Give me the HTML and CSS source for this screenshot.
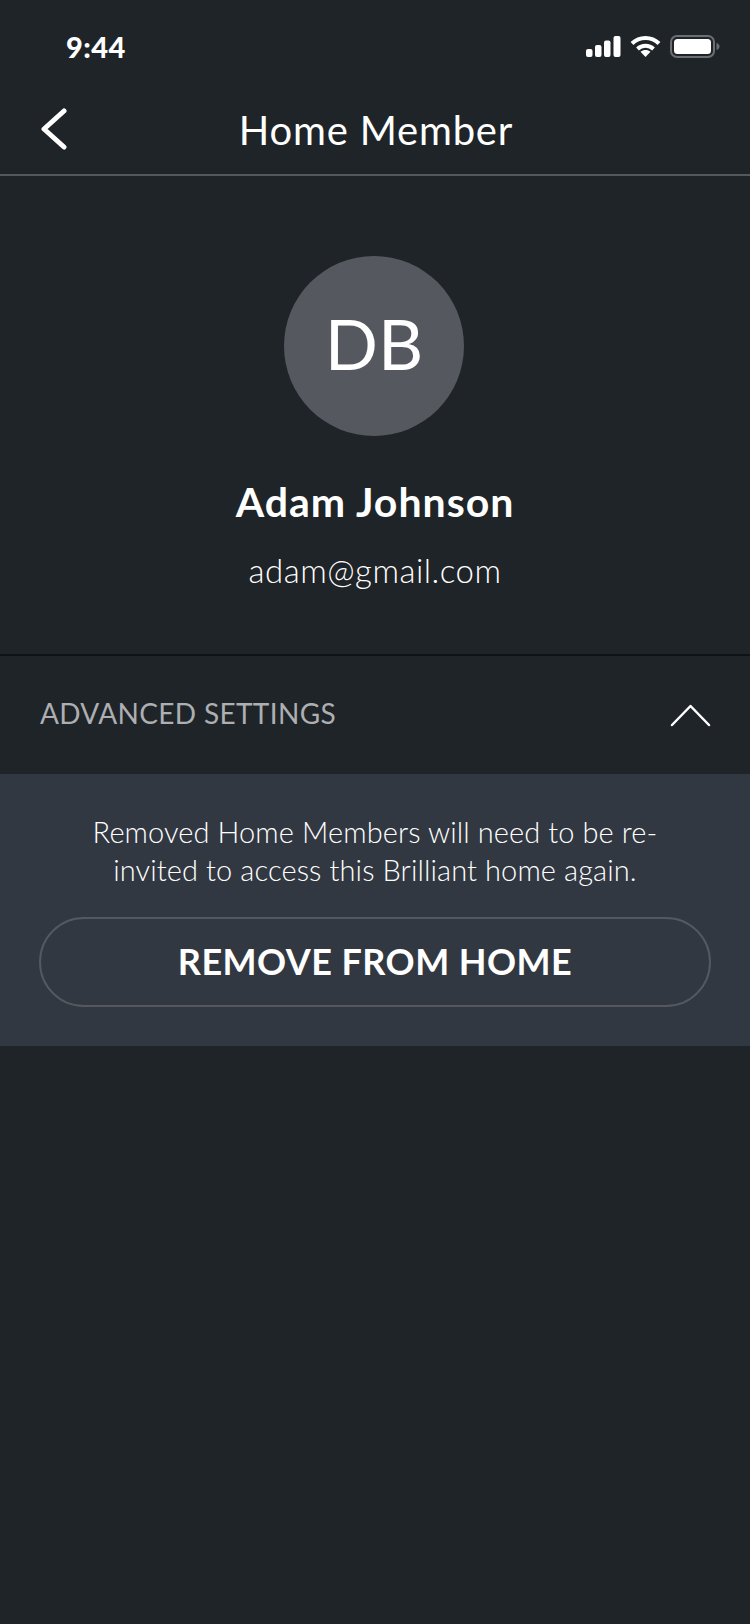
FILE: index.html
```html
<!DOCTYPE html>
<html lang="en">
<head>
    <meta charset="UTF-8">
    <meta name="viewport" content="width=device-width, initial-scale=1.0">
    <title>Home Member</title>
    <link rel="stylesheet" href="styles.css">
</head>
<body>
    <div class="screen">
        <div class="status-bar">
            <span class="time">9:44</span>
            <div class="status-icons">
                <svg class="icon-signal" width="35" height="21" viewBox="0 0 35 21" fill="#fff">
                    <rect x="0" y="13" width="6.5" height="8" rx="2"/>
                    <rect x="9" y="9" width="6.5" height="12" rx="2"/>
                    <rect x="18" y="4.5" width="6.5" height="16.5" rx="2"/>
                    <rect x="27.5" y="0" width="7" height="21" rx="2"/>
                </svg>
                <svg class="icon-wifi" width="31" height="23" viewBox="0 0 31 23" fill="none" stroke="#fff" stroke-width="4">
                    <path d="M2 8.5C9.5 1 21.5 1 29 8.5"/>
                    <path d="M7.5 14C12 9.8 19 9.8 23.5 14"/>
                    <path d="M10.5 16.8L15.5 22L20.5 16.8C17.5 14.4 13.5 14.4 10.5 16.8Z" fill="#fff" stroke="none"/>
                </svg>
                <svg class="icon-battery" width="50" height="23" viewBox="0 0 50 23">
                    <rect x="1" y="1" width="43" height="21" rx="6" fill="none" stroke="#6b6e73" stroke-width="2"/>
                    <rect x="4" y="4" width="37" height="15" rx="3.5" fill="#fff"/>
                    <path d="M46.5 8C48.5 8.6 49.5 10 49.5 11.5S48.5 14.4 46.5 15Z" fill="#6b6e73"/>
                </svg>
            </div>
        </div>

        <div class="nav-bar">
            <svg class="back" width="26" height="42" viewBox="0 0 26 42" fill="none" stroke="#fff" stroke-width="5" stroke-linecap="round" stroke-linejoin="round">
                <path d="M23 3L3 21L23 39"/>
            </svg>
            <h1 class="title">Home Member</h1>
        </div>

        <div class="profile">
            <div class="avatar">DB</div>
            <div class="name">Adam Johnson</div>
            <div class="email">adam@gmail.com</div>
        </div>

        <div class="advanced-row">
            <span class="advanced-label">ADVANCED SETTINGS</span>
            <svg width="41" height="23" viewBox="0 0 41 23" fill="none" stroke="#fff" stroke-width="2.5" stroke-linecap="round" stroke-linejoin="round">
                <path d="M2 21L20.5 2L39 21"/>
            </svg>
        </div>

        <div class="advanced-panel">
            <p class="notice">Removed Home Members will need to be re-<br>invited to access this Brilliant home again.</p>
            <button class="remove-btn">REMOVE FROM HOME</button>
        </div>
    </div>
</body>
</html>
```

FILE: styles.css
```css
body {
    margin: 0;
    background: #1f2428;
    color: #ffffff;
    font-family: Lato, "Open Sans", sans-serif;
}

.screen {
    width: 750px;
    height: 1624px;
    overflow: hidden;
}

/* status bar */
.status-bar {
    height: 94px;
    display: flex;
    justify-content: space-between;
    align-items: center;
    padding: 0 30px 2px 66px;
    box-sizing: border-box;
}

.time {
    font-size: 29px;
    font-weight: 900;
    letter-spacing: 0.4px;
}

.status-icons {
    display: flex;
    align-items: center;
    gap: 9px;
}

/* nav */
.nav-bar {
    height: 82px;
    box-sizing: border-box;
    border-bottom: 2px solid #55585e;
    padding: 0 0 8px 2px;
    display: flex;
    align-items: center;
    justify-content: center;
    position: relative;
}

.back {
    position: absolute;
    left: 41px;
    top: 14px;
}

.title {
    margin: 0;
    font-size: 40px;
    font-weight: 400;
    letter-spacing: 0.8px;
}

/* profile */
.profile {
    height: 478px;
    box-sizing: border-box;
    padding-top: 80px;
    display: flex;
    flex-direction: column;
    align-items: center;
}

.avatar {
    width: 180px;
    height: 180px;
    margin-right: 2px;
    padding-bottom: 6px;
    box-sizing: border-box;
    border-radius: 50%;
    background: #55585f;
    display: flex;
    align-items: center;
    justify-content: center;
    font-size: 70px;
}

.name {
    margin-top: 41px;
    font-size: 41px;
    font-weight: 700;
    line-height: 50px;
    letter-spacing: 1px;
}

.email {
    margin-top: 23px;
    font-size: 33px;
    font-weight: 300;
    line-height: 40px;
    letter-spacing: 0.5px;
}

/* advanced */
.advanced-row {
    height: 120px;
    box-sizing: border-box;
    border-top: 2px solid #101316;
    padding: 0 39px 4px 40px;
    display: flex;
    justify-content: space-between;
    align-items: center;
}

.advanced-row svg {
    margin-top: 4px;
}

.advanced-label {
    font-size: 28px;
    color: #adafb2;
    letter-spacing: 0.35px;
}

.advanced-panel {
    height: 272px;
    box-sizing: border-box;
    background: #323841;
    padding: 39px 39px 0;
}

.notice {
    margin: 0 0 28px;
    font-size: 29px;
    font-weight: 300;
    line-height: 38px;
    letter-spacing: 0.1px;
    text-align: center;
}

.remove-btn {
    display: block;
    width: 100%;
    height: 90px;
    padding: 0 0 3px;
    border: 2px solid #55585f;
    border-radius: 45px;
    background: none;
    color: #ffffff;
    font-family: inherit;
    font-size: 36px;
    font-weight: 700;
    letter-spacing: 0.45px;
}
```
